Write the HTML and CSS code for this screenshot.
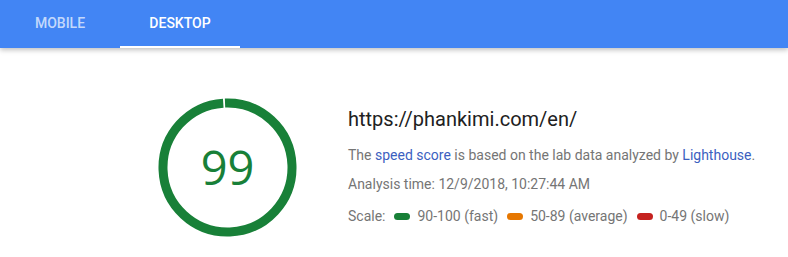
FILE: index.html
```html
<!DOCTYPE html>
<html>
<head>
<meta charset="utf-8">
<link rel="stylesheet" href="styles.css">
</head>
<body>
<header class="tabs">
  <div class="tab">MOBILE</div>
  <div class="tab active">DESKTOP</div>
</header>
<main class="result">
  <div class="gauge">
    <svg width="140" height="140" viewBox="0 0 140 140">
      <circle cx="69.5" cy="69.5" r="64.5" fill="none" stroke="#188038" stroke-width="9"
        stroke-dasharray="402.8 405.3" transform="rotate(-92.2 69.5 69.5)"/>
    </svg>
    <div class="score">99</div>
  </div>
  <div class="info">
    <div class="url">https://phankimi.com/en/</div>
    <p class="line">The <a href="#">speed score</a> is based on the lab data analyzed by <a href="#">Lighthouse</a>.</p>
    <p class="line">Analysis time: 12/9/2018, 10:27:44 AM</p>
    <p class="line scale">Scale:
      <span class="pill fast"></span>90-100 (fast)
      <span class="pill avg"></span>50-89 (average)
      <span class="pill slow"></span>0-49 (slow)
    </p>
  </div>
</main>
</body>
</html>
```
FILE: styles.css
```css
* { box-sizing: border-box; }
body {
  margin: 0;
  background: #fff;
  font-family: Roboto, "Liberation Sans", Arial, sans-serif;
  width: 788px;
  height: 257px;
  overflow: hidden;
}
.tabs {
  height: 48px;
  background: #4285f4;
  display: flex;
  box-shadow: 0 2px 5px rgba(0,0,0,0.25);
  position: relative;
  z-index: 1;
}
.tab {
  width: 120px;
  display: flex;
  align-items: center;
  justify-content: center;
  font-size: 14px;
  font-weight: 500;
  color: rgba(255,255,255,0.7);
  border-bottom: 2px solid transparent;
}
.tab.active {
  color: #fff;
  border-bottom-color: #fff;
}
.result {
  display: flex;
  padding: 50px 0 0 158px;
}
.gauge {
  position: relative;
  width: 140px;
  height: 140px;
}
.gauge svg { display: block; }
.score {
  position: absolute;
  top: 0;
  left: 0;
  width: 139px;
  height: 139px;
  display: flex;
  align-items: center;
  justify-content: center;
  font-family: "Open Sans", sans-serif;
  font-size: 47px;
  color: #188038;
  padding-bottom: 2px;
}
.info {
  margin-left: 50px;
  padding-top: 9px;
}
.url {
  font-size: 20px;
  color: #212121;
  line-height: 24px;
  margin-bottom: 14px;
}
.line {
  margin: 0 0 9px;
  font-size: 14px;
  line-height: 20px;
  color: #757575;
}
.line a {
  color: #3c5fbf;
  text-decoration: none;
}
.scale {
  display: flex;
  align-items: center;
  margin-top: 12px;
}
.pill {
  display: inline-block;
  width: 16px;
  height: 7px;
  border-radius: 4px;
  margin: 0 7px 0 9px;
}
.fast { background: #188038; }
.avg { background: #e67700; }
.slow { background: #c5221f; }
```
